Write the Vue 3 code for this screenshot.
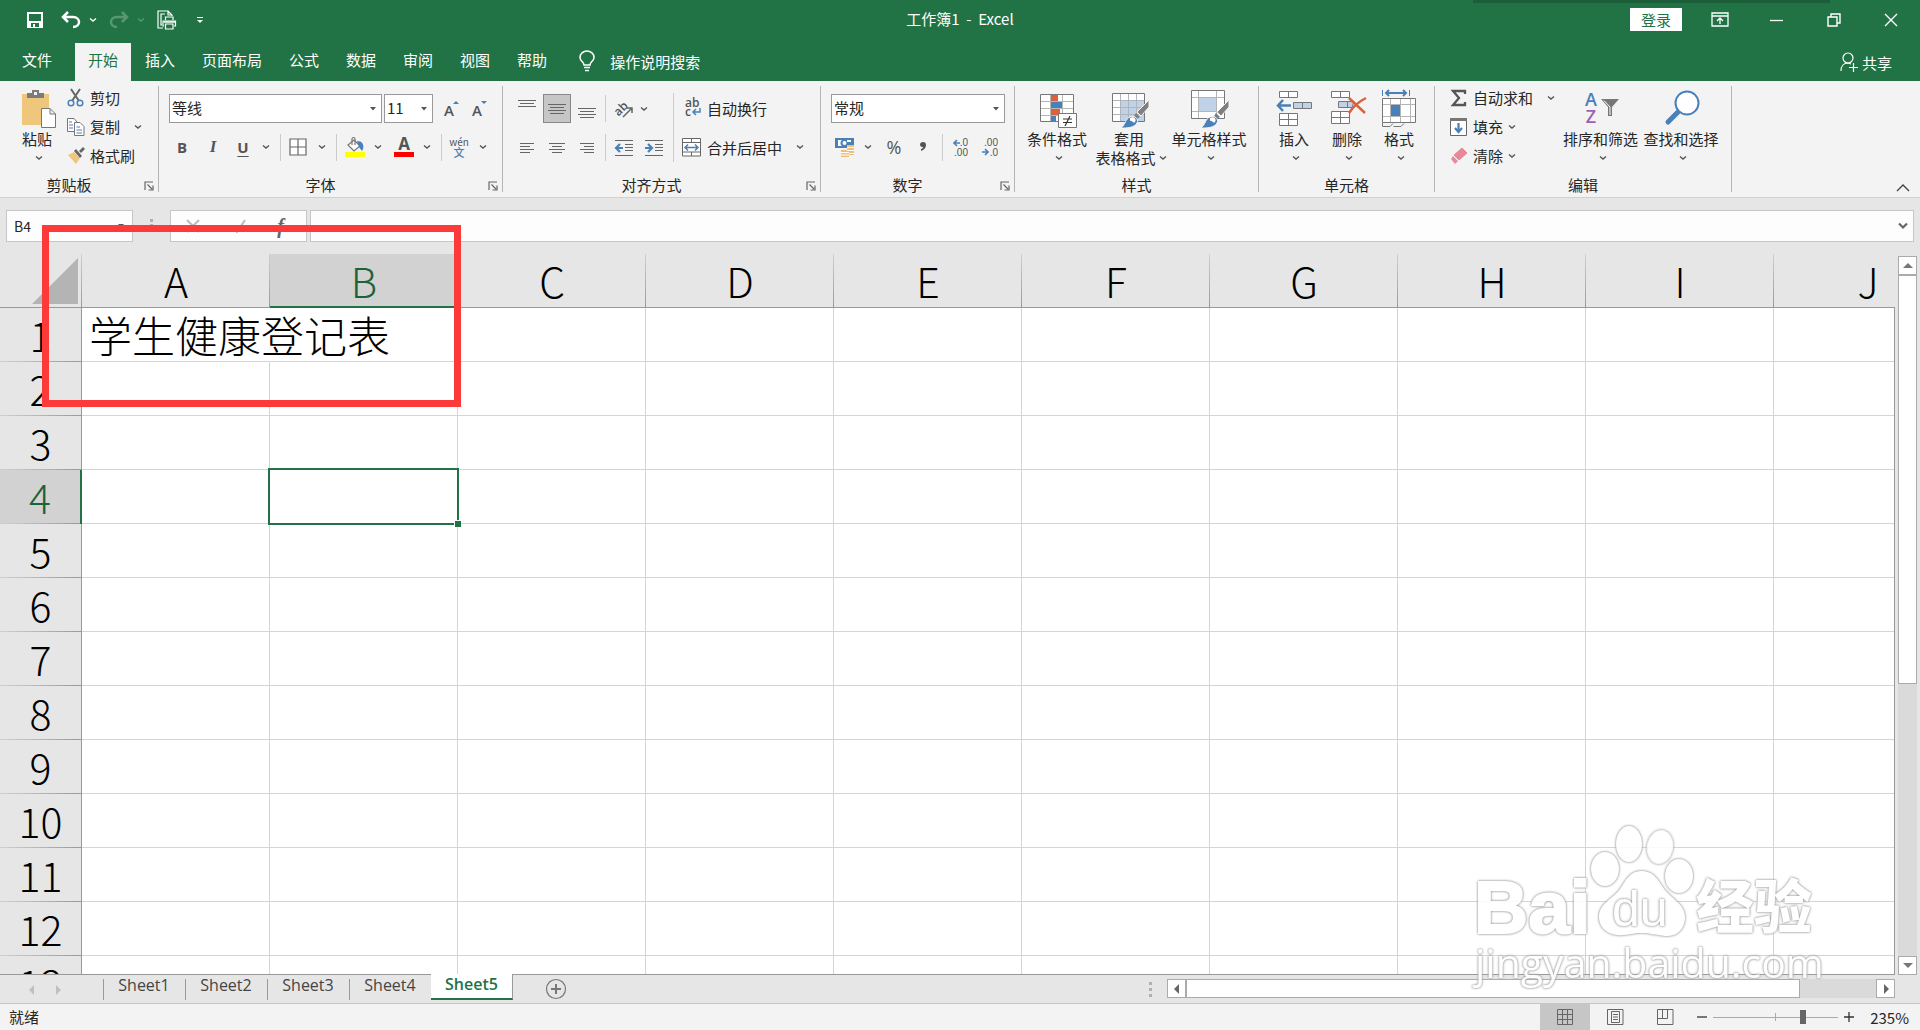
<template>
  <div class="excel">
    <!-- 公用图形 -->
    <svg class="defs" aria-hidden="true">
      <symbol id="chev" viewBox="0 0 8 6"><path d="M1 1.5L4 4L7 1.5" fill="none" stroke="currentColor" stroke-width="1.4" /></symbol>
      <symbol id="tri" viewBox="0 0 8 6"><path d="M1 1H7L4 4.5Z" fill="currentColor" /></symbol>
      <symbol id="launch" viewBox="0 0 10 10"><path d="M1 9V1H9M3.500 3.500L8 8M9 4.500V9H4.500" fill="none" stroke="#666" stroke-width="1.200" /></symbol>
      <symbol id="brush" viewBox="0 0 42 42">
        <path d="M41 13V20L33 29L29 25Z" fill="#7f7f7f" stroke="#f3f3f3" />
        <path d="M28 26L32 30L29 32L26 29Z" fill="#7f7f7f" />
        <path d="M13 41C18 37 17 32 22 30C27 28 31 32 29 36C26 41 19 41 13 41Z" fill="#4a80b8" stroke="#f3f3f3" />
        <path d="M22 31C26 29 29 32 27 35C25 37 24 33 22 34Z" fill="#fff" />
      </symbol>
    </svg>

    <header class="titlebar">
      <div class="quick">
        <button class="icon-btn save" aria-label="保存">
          <svg width="18" height="18" viewBox="0 0 18 18"><path fill="#fff" fill-rule="evenodd" d="M1 1H17V17H1ZM3 3V10H15V3ZM5 12V16H7V13H9V16H13V12Z" /></svg>
        </button>
        <button class="icon-btn" aria-label="撤消">
          <svg width="20" height="18" viewBox="0 0 20 18"><path d="M7 1L2 6L7 11M2 6H12C20 6 20 16 12 16" fill="none" stroke="#fff" stroke-width="2.500" /></svg>
          <svg class="chev"><use href="#chev" /></svg>
        </button>
        <button class="icon-btn redo" aria-label="恢复">
          <svg width="20" height="18" viewBox="0 0 20 18"><path d="M13 1L18 6L13 11M18 6H8C0 6 0 16 8 16" fill="none" stroke="#fff" stroke-width="2.500" /></svg>
          <svg class="chev"><use href="#chev" /></svg>
        </button>
        <button class="icon-btn" aria-label="打印预览">
          <svg width="20" height="20" viewBox="0 0 20 20" fill="none" stroke="#fff" stroke-width="1.200">
            <path d="M6 18H1V1H11L15 5V6M11 1V5H15M5 15H4V4H8" />
            <path d="M8.500 10V7H16V10M7 16H6V11H18.500V16H17M8.500 14H16V19H8.500Z" />
            <path d="M7 12H18" stroke-width="1.500" />
          </svg>
        </button>
        <button class="icon-btn more" aria-label="自定义快速访问工具栏">
          <svg width="8" height="8" viewBox="0 0 8 8"><path d="M1 1.500H7" stroke="#fff" /><path d="M1 4H7L4 7Z" fill="#fff" /></svg>
        </button>
      </div>
      <div class="doc-title">工作簿1&nbsp; -&nbsp; Excel</div>
      <div class="window-tools">
        <button class="login">登录</button>
        <button class="win-btn" aria-label="功能区显示选项">
          <svg width="18" height="16" viewBox="0 0 18 16" fill="none" stroke="#fff" stroke-width="1.300"><path d="M1 1H17V14H1ZM1 4H17M9 12V6M6 9L9 6L12 9" /></svg>
        </button>
        <button class="win-btn" aria-label="最小化">
          <svg width="14" height="14" viewBox="0 0 14 14"><path d="M0 7.500H13" stroke="#fff" stroke-width="1.300" /></svg>
        </button>
        <button class="win-btn" aria-label="还原">
          <svg width="14" height="14" viewBox="0 0 14 14" fill="none" stroke="#fff" stroke-width="1.400"><path d="M1 4H10V13H1ZM4 4V1H13V10H10" /></svg>
        </button>
        <button class="win-btn" aria-label="关闭">
          <svg width="14" height="14" viewBox="0 0 14 14"><path d="M1 1L13 13M13 1L1 13" stroke="#fff" stroke-width="1.400" /></svg>
        </button>
      </div>
      <div class="top-shade"></div>
    </header>

    <nav class="tabs">
      <button
        v-for="tab in tabs"
        :key="tab"
        class="tab"
        :class="{ active: tab === activeTab, file: tab === '文件' }"
        @click="activeTab = tab"
      >{{ tab }}</button>
      <button class="tell-me">
        <svg width="16" height="22" viewBox="0 0 16 22" fill="none" stroke="#fff" stroke-width="1.500">
          <path d="M5 15C5 12 1 11 1 7.500A7 6.500 0 0 1 15 7.500C15 11 11 12 11 15ZM5 17.500H11M6 20.500H10" />
        </svg>
        操作说明搜索
      </button>
      <button class="share">
        <svg width="18" height="20" viewBox="0 0 18 20" fill="none" stroke="#fff" stroke-width="1.200">
          <circle cx="8" cy="6" r="5" /><path d="M1 19C1 14 4 11 8 11L11 12M9 15.500H18M13.500 11V20" />
        </svg>
        共享
      </button>
    </nav>

    <section class="ribbon">
      <div class="group clipboard">
        <div class="group-body">
          <button class="big">
            <svg class="big-icon" viewBox="0 0 42 42">
              <path d="M6 7H33V38H6Z" fill="#eec77d" />
              <path d="M11 11V6H16V3H23V6H28V11Z" fill="#7b7b7b" /><path d="M18 5H21V8H18Z" fill="#f3f3f3" />
              <path d="M25.500 21.500H34L39.500 27V40.500H25.500ZM34 21.500V27H39.500" fill="#fff" stroke="#777" />
            </svg>
            <span>粘贴</span>
            <svg class="chev"><use href="#chev" /></svg>
          </button>
          <div class="small-list">
            <button class="small">
              <svg width="18" height="18" viewBox="0 0 18 18" fill="none">
                <path d="M4 0L12 12M13 0L5 12" stroke="#666" stroke-width="2" />
                <circle cx="4" cy="14" r="2.800" stroke="#4a80b8" stroke-width="1.500" /><circle cx="13" cy="14" r="2.800" stroke="#4a80b8" stroke-width="1.500" />
              </svg>剪切
            </button>
            <button class="small">
              <svg width="18" height="18" viewBox="0 0 18 18" fill="#fff" stroke="#777">
                <path d="M.5.5H7L10 4V13.500H.5Z" /><path d="M7.500 4.500H13L17 8.500V17.500H7.500Z" />
                <path d="M2 4H5M2 7H6M2 10H6M9.500 9H13M9.500 12H15M9.500 15H15" stroke="#4a80b8" />
              </svg>复制
              <svg class="chev far"><use href="#chev" /></svg>
            </button>
            <button class="small">
              <svg width="18" height="18" viewBox="0 0 18 18">
                <path d="M1 8L7 5L13 11L9 17Z" fill="#eec77d" /><path d="M7 4L9 2L15 9L13 11Z" fill="#666" /><path d="M12 4L16 0L18 2L14 6Z" fill="#666" />
              </svg>格式刷
            </button>
          </div>
        </div>
        <div class="group-foot"><span>剪贴板</span><button class="launcher" aria-label="剪贴板设置"><svg><use href="#launch" /></svg></button></div>
      </div>

      <div class="group font">
        <div class="group-body rows">
          <div class="row">
            <div class="combo font-name">
              <select aria-label="字体"><option>等线</option></select>
              <svg class="chev"><use href="#tri" /></svg>
            </div>
            <div class="combo font-size">
              <select aria-label="字号"><option>11</option></select>
              <svg class="chev"><use href="#tri" /></svg>
            </div>
            <div class="size-btns">
              <button class="tool" aria-label="增大字号">
                <svg width="16" height="18" viewBox="0 0 16 18"><text x="0" y="16" class="glyph big-a">A</text><path d="M9 4L12 1L15 4Z" fill="#4a80b8" /></svg>
              </button>
              <button class="tool" aria-label="减小字号">
                <svg width="16" height="18" viewBox="0 0 16 18"><text x="0" y="16" class="glyph big-a">A</text><path d="M9 1H15L12 4Z" fill="#4a80b8" /></svg>
              </button>
            </div>
          </div>
          <div class="row font-tools">
            <button class="tool bold">B</button>
            <button class="tool italic">I</button>
            <button class="tool underline">U</button>
            <button class="tool" aria-label="下划线选项"><svg class="chev"><use href="#chev" /></svg></button>
            <i class="sep"></i>
            <button class="tool" aria-label="边框">
              <svg width="18" height="18" viewBox="0 0 18 18"><path d="M1 1H17V17H1ZM9 1V17M1 9H17" fill="#fff" stroke="#666" stroke-width="1.200" /></svg>
            </button>
            <button class="tool" aria-label="边框选项"><svg class="chev"><use href="#chev" /></svg></button>
            <i class="sep"></i>
            <button class="tool" aria-label="填充颜色">
              <svg width="20" height="20" viewBox="0 0 20 20">
                <path d="M3 8L9 3L15 9L9 14Z" fill="#fff" stroke="#777" stroke-width="1.200" /><path d="M7 8V2C7 0 10 0 10 2V8" fill="none" stroke="#777" stroke-width="1.200" />
                <path d="M12 4C18 4 20 9 17 14L14 10Z" fill="#4a80b8" /><path d="M0 15H20V20H0Z" fill="#ff0" />
              </svg>
            </button>
            <button class="tool" aria-label="填充颜色选项"><svg class="chev"><use href="#chev" /></svg></button>
            <button class="tool" aria-label="字体颜色">
              <svg width="20" height="20" viewBox="0 0 20 20"><text x="10" y="13" text-anchor="middle" class="glyph color-a">A</text><path d="M0 15H20V20H0Z" fill="#f00" /></svg>
            </button>
            <button class="tool" aria-label="字体颜色选项"><svg class="chev"><use href="#chev" /></svg></button>
            <i class="sep"></i>
            <button class="tool pinyin"><span>wén</span><b>文</b></button>
            <button class="tool" aria-label="拼音选项"><svg class="chev"><use href="#chev" /></svg></button>
          </div>
        </div>
        <div class="group-foot"><span>字体</span><button class="launcher" aria-label="字体设置"><svg><use href="#launch" /></svg></button></div>
      </div>

      <div class="group align">
        <div class="group-body">
          <div class="rows">
            <div class="row align-tools">
              <button class="tool" aria-label="顶端对齐"><svg width="18" height="22" viewBox="0 0 18 22"><path d="M0 2.500H18M2 5.500H16M0 8.500H18" class="bars" /></svg></button>
              <button class="tool pressed" aria-label="垂直居中"><svg width="18" height="22" viewBox="0 0 18 22"><path d="M0 6.500H18M2 9.500H16M0 12.500H18M2 15.500H16" class="bars" /></svg></button>
              <button class="tool" aria-label="底端对齐"><svg width="18" height="22" viewBox="0 0 18 22"><path d="M0 10.500H18M2 13.500H16M0 16.500H18M2 19.500H16" class="bars" /></svg></button>
              <i class="sep"></i>
              <button class="tool" aria-label="方向">
                <svg width="20" height="20" viewBox="0 0 20 20"><text x="1" y="15" class="glyph ab" transform="rotate(-45 6 12)">ab</text><path d="M9 18L18 9M13 9H18V14" fill="none" stroke="#666" stroke-width="1.500" /></svg>
              </button>
              <button class="tool" aria-label="方向选项"><svg class="chev"><use href="#chev" /></svg></button>
            </div>
            <div class="row align-tools lower">
              <button class="tool" aria-label="左对齐"><svg width="14" height="12" viewBox="0 0 14 12"><path d="M0 1.500H14M0 4.500H10M0 7.500H14M0 10.500H10" class="bars" /></svg></button>
              <button class="tool" aria-label="居中"><svg width="16" height="12" viewBox="0 0 16 12"><path d="M0 1.500H16M3 4.500H13M0 7.500H16M3 10.500H13" class="bars" /></svg></button>
              <button class="tool" aria-label="右对齐"><svg width="14" height="12" viewBox="0 0 14 12"><path d="M0 1.500H14M4 4.500H14M0 7.500H14M4 10.500H14" class="bars" /></svg></button>
              <i class="sep"></i>
              <button class="tool" aria-label="减少缩进量">
                <svg width="18" height="18" viewBox="0 0 18 18"><path d="M0 1.500H18M10 5.500H18M10 8.500H18M10 11.500H18M0 16.500H18" class="bars" /><path d="M8 9H1M5 5L1 9L5 13" fill="none" stroke="#4a80b8" stroke-width="2.200" /></svg>
              </button>
              <button class="tool" aria-label="增加缩进量">
                <svg width="18" height="18" viewBox="0 0 18 18"><path d="M0 1.500H18M10 5.500H18M10 8.500H18M10 11.500H18M0 16.500H18" class="bars" /><path d="M0 9H7M3 5L7 9L3 13" fill="none" stroke="#4a80b8" stroke-width="2.200" /></svg>
              </button>
            </div>
          </div>
          <i class="sep tall"></i>
          <div class="rows wrap-list">
            <button class="small">
              <svg width="20" height="20" viewBox="0 0 20 20"><text x="3" y="9" class="glyph ab">ab</text><text x="3" y="18" class="glyph ab">c</text><path d="M18 10V14H11M14 11L11 14L14 17" fill="none" stroke="#4a80b8" stroke-width="1.500" /></svg>自动换行
            </button>
            <button class="small">
              <svg width="20" height="20" viewBox="0 0 20 20" fill="#fff" stroke="#666"><path d="M.5 1.500H18.500V19H.5ZM.5 5.500H18.500M.5 15H18.500M9.500 1V5M9.500 15V19" /><path d="M3 10.500H16M6 7.500L3 10.500L6 13.500M13 7.500L16 10.500L13 13.500" fill="none" stroke="#4a80b8" stroke-width="1.500" /></svg>合并后居中
              <svg class="chev far"><use href="#chev" /></svg>
            </button>
          </div>
        </div>
        <div class="group-foot"><span>对齐方式</span><button class="launcher" aria-label="对齐设置"><svg><use href="#launch" /></svg></button></div>
      </div>

      <div class="group number">
        <div class="group-body rows">
          <div class="combo">
            <select aria-label="数字格式"><option>常规</option></select>
            <svg class="chev"><use href="#tri" /></svg>
          </div>
          <div class="row number-tools">
            <button class="tool" aria-label="会计数字格式">
              <svg width="20" height="20" viewBox="0 0 20 20">
                <path d="M0 1H19V11H0Z" fill="#4a80b8" /><path d="M3 3H7C5 4 5 8 7 9H3ZM16 3H12V5H16Z" fill="#fff" /><circle cx="9.500" cy="6" r="2" fill="#fff" />
                <path d="M12 8H19V18H12Z" fill="#eec07a" /><path d="M6 13H14V20H6Z" fill="#eec07a" /><path d="M12 10.500H19M12 13.500H19M14 16.500H19M6 15.500H14M6 18H14" stroke="#fff" />
              </svg>
            </button>
            <button class="tool" aria-label="会计格式选项"><svg class="chev"><use href="#chev" /></svg></button>
            <button class="tool percent">%</button>
            <button class="tool" aria-label="千位分隔样式"><svg width="8" height="12" viewBox="0 0 8 12"><path d="M1 4A3 3 0 1 1 7 4C7 7 5 9 2 10V8C4 7 4 7 4 6A2.500 2.500 0 0 1 1 4Z" fill="#555" /></svg></button>
            <i class="sep"></i>
            <button class="tool" aria-label="增加小数位数">
              <svg width="16" height="20" viewBox="0 0 16 20"><text x="15" y="9" text-anchor="end" class="glyph dec">.0</text><text x="15" y="19" text-anchor="end" class="glyph dec">.00</text><path d="M7 6H1M4 3L1 6L4 9" fill="none" stroke="#4a80b8" stroke-width="1.700" /></svg>
            </button>
            <button class="tool" aria-label="减少小数位数">
              <svg width="16" height="20" viewBox="0 0 16 20"><text x="16" y="9" text-anchor="end" class="glyph dec">.00</text><text x="16" y="19" text-anchor="end" class="glyph dec">.0</text><path d="M0 15H6M3 12L6 15L3 18" fill="none" stroke="#4a80b8" stroke-width="1.700" /></svg>
            </button>
          </div>
        </div>
        <div class="group-foot"><span>数字</span><button class="launcher" aria-label="数字设置"><svg><use href="#launch" /></svg></button></div>
      </div>

      <div class="group styles">
        <div class="group-body">
          <button class="big">
            <svg class="big-icon" viewBox="0 0 42 42">
              <path d="M4.500 7.500H37.500V34.500H4.500Z" fill="#fff" stroke="#777" />
              <path d="M5 14.500H37M5 21.500H37M5 28.500H37M14.500 8V34M26.500 8V34" stroke="#b5b5b5" />
              <path d="M15 8H22V14H15ZM15 22H24V28H15Z" fill="#d9623b" /><path d="M15 15H26V21H15ZM15 29H20V34H15Z" fill="#4a80b8" />
              <path d="M22.500 26.500H40.500V40.500H22.500Z" fill="#fff" stroke="#777" /><path d="M27 32H36M27 35.500H36M34 29L29 39" stroke="#333" stroke-width="1.200" />
            </svg>
            <span>条件格式</span>
            <svg class="chev"><use href="#chev" /></svg>
          </button>
          <button class="big">
            <svg class="big-icon" viewBox="0 0 42 42">
              <path d="M4.500 6.500H36.500V34.500H4.500Z" fill="#fff" stroke="#777" /><path d="M12.500 14H36V34H12.500Z" fill="#bfd2e8" />
              <path d="M5 13.500H36M5 20.500H36M5 27.500H36M12.500 7V34M20.500 7V34M28.500 7V34" stroke="#b0b5bc" /><use href="#brush" />
            </svg>
            <span>套用</span>
            <span class="second">表格格式 <svg class="chev"><use href="#chev" /></svg></span>
          </button>
          <button class="big">
            <svg class="big-icon" viewBox="0 0 42 42">
              <path d="M3.500 3.500H36.500V31.500H3.500Z" fill="#fff" stroke="#777" />
              <path d="M4 10.500H36M4 24.500H36M10.500 4V31M28.500 4V31" stroke="#b5b5b5" /><path d="M11 11H28V24H11Z" fill="#bfd2e8" /><use href="#brush" />
            </svg>
            <span>单元格样式</span>
            <svg class="chev"><use href="#chev" /></svg>
          </button>
        </div>
        <div class="group-foot"><span>样式</span></div>
      </div>

      <div class="group cells">
        <div class="group-body">
          <button class="big">
            <svg class="big-icon" viewBox="0 0 42 42">
              <path d="M6.500 4.500H24.500V10.500H6.500ZM15.500 4.500V10.500M6.500 26.500H24.500V38.500H6.500ZM15.500 26.500V38.500M6.500 32.500H24.500" fill="#fff" stroke="#777" />
              <path d="M20.500 15.500H38.500V21.500H20.500ZM29.500 15.500V21.500" fill="#bfd2e8" stroke="#777" />
              <path d="M18 18.500H5M10 13L5 18.500L10 24" fill="none" stroke="#4a80b8" stroke-width="2.500" />
            </svg>
            <span>插入</span>
            <svg class="chev"><use href="#chev" /></svg>
          </button>
          <button class="big">
            <svg class="big-icon" viewBox="0 0 42 42">
              <path d="M5.500 4.500H23.500V10.500H5.500ZM14.500 4.500V10.500M5.500 24.500H23.500V36.500H5.500ZM14.500 24.500V36.500M5.500 30.500H23.500" fill="#fff" stroke="#777" />
              <path d="M12.500 14.500H28L26 20.500H12.500ZM21.500 14.500V20.500" fill="#bfd2e8" stroke="#777" />
              <path d="M23 11L39 26M40 11C34 14 27 20 23 26" fill="none" stroke="#d9623b" stroke-width="2.500" />
            </svg>
            <span>删除</span>
            <svg class="chev"><use href="#chev" /></svg>
          </button>
          <button class="big">
            <svg class="big-icon" viewBox="0 0 42 42">
              <path d="M4.500 11.500H37.500V35.500H4.500Z" fill="#fff" stroke="#777" />
              <path d="M5 17.500H37M5 29.500H37M12.500 12V35M22.500 12V35M32.500 12V35" stroke="#b5b5b5" /><path d="M13 18H22V29H13Z" fill="#4a80b8" />
              <path d="M4.500 36V39.500H12L15 36.500M15.500 39.500H23L26 36.500" fill="none" stroke="#777" />
              <path d="M4.500 3V9M31.500 3V9" stroke="#4a80b8" /><path d="M8 6H28M11 3L8 6L11 9M25 3L28 6L25 9" fill="none" stroke="#4a80b8" stroke-width="2" />
            </svg>
            <span>格式</span>
            <svg class="chev"><use href="#chev" /></svg>
          </button>
        </div>
        <div class="group-foot"><span>单元格</span></div>
      </div>

      <div class="group edit">
        <div class="group-body">
          <div class="small-list">
            <button class="small">
              <svg width="18" height="18" viewBox="0 0 18 18"><path d="M15 5V2H3L9 9L3 16H15V13" fill="none" stroke="#555" stroke-width="2.300" /></svg>自动求和
              <svg class="chev far"><use href="#chev" /></svg>
            </button>
            <button class="small">
              <svg width="18" height="18" viewBox="0 0 18 18"><path d="M.5 1.500H16.500V17.500H.5Z" fill="#fff" stroke="#666" /><path d="M0 0H17V3H0Z" fill="#777" /><path d="M8.500 5V14M5 10L8.500 14L12 10" fill="none" stroke="#4a80b8" stroke-width="2.200" /></svg>填充
              <svg class="chev"><use href="#chev" /></svg>
            </button>
            <button class="small">
              <svg width="18" height="18" viewBox="0 0 18 18"><path d="M12 1L17 6L9 13L4 8Z" fill="#e8899a" stroke="#e8899a" stroke-linejoin="round" /><path d="M3 9L8 14L5 17L1 12Z" fill="#e8899a" /></svg>清除
              <svg class="chev"><use href="#chev" /></svg>
            </button>
          </div>
          <button class="big">
            <svg class="big-icon" viewBox="0 0 42 42">
              <text x="11" y="19" text-anchor="middle" class="glyph letter blue">A</text><text x="11" y="36" text-anchor="middle" class="glyph letter purple">Z</text>
              <path d="M21 12H39L32 20V29H28V20Z" fill="#777" /><path d="M24 13.500L30 20V28" fill="none" stroke="#fff" />
            </svg>
            <span>排序和筛选</span>
            <svg class="chev"><use href="#chev" /></svg>
          </button>
          <button class="big">
            <svg class="big-icon" viewBox="0 0 42 42">
              <path d="M19 24L8 35" stroke="#4a80b8" stroke-width="5" stroke-linecap="round" /><circle cx="27" cy="16" r="11.500" fill="#fff" stroke="#4a80b8" stroke-width="2" />
            </svg>
            <span>查找和选择</span>
            <svg class="chev"><use href="#chev" /></svg>
          </button>
        </div>
        <div class="group-foot"><span>编辑</span></div>
      </div>

      <button class="collapse" aria-label="折叠功能区">
        <svg width="14" height="8" viewBox="0 0 14 8"><path d="M1 7L7 1L13 7" fill="none" stroke="#444" stroke-width="1.400" /></svg>
      </button>
    </section>

    <div class="formula-bar">
      <div class="name-box">
        <input v-model="cellName" aria-label="名称框" />
        <svg class="chev"><use href="#tri" /></svg>
      </div>
      <div class="grip"></div>
      <div class="fx-box">
        <button aria-label="取消"><svg width="16" height="16" viewBox="0 0 16 16"><path d="M2 2L14 14M14 2L2 14" stroke="#bbb" stroke-width="2" /></svg></button>
        <button aria-label="输入"><svg width="16" height="16" viewBox="0 0 16 16"><path d="M2 10L6 14L14 2" fill="none" stroke="#bbb" stroke-width="2" /></svg></button>
        <button class="fx">f</button>
      </div>
      <div class="formula">
        <input v-model="formula" aria-label="编辑栏" />
        <svg width="10" height="8" viewBox="0 0 10 8"><path d="M1 1.500L5 5.500L9 1.500" fill="none" stroke="#666" stroke-width="2.200" /></svg>
      </div>
    </div>

    <main class="work">
      <div class="sheet">
        <table>
          <thead>
            <tr>
              <th class="corner"><svg width="46" height="46" viewBox="0 0 46 46"><path d="M46 0V46H0Z" fill="#b4b4b4" /></svg></th>
              <th v-for="col in columns" :key="col" :class="{ current: col === 'B' }">{{ col }}</th>
            </tr>
          </thead>
          <tbody>
            <tr v-for="row in 13" :key="row">
              <th :class="{ current: row === 4 }">{{ row }}</th>
              <td
                v-for="col in columns"
                :key="col"
                :class="{ selected: col + row === cellName, spill: cells[col + row] }"
              >{{ cells[col + row] }}</td>
            </tr>
          </tbody>
        </table>
      </div>
      <div class="vscroll">
        <button aria-label="向上滚动"><svg width="10" height="6" viewBox="0 0 10 6"><path d="M0 5H10L5 0Z" fill="#777" /></svg></button>
        <div class="track"><div class="thumb"></div></div>
        <button aria-label="向下滚动"><svg width="10" height="6" viewBox="0 0 10 6"><path d="M0 0H10L5 5Z" fill="#777" /></svg></button>
      </div>
    </main>

    <div class="sheet-bar">
      <div class="sheet-nav">
        <button aria-label="上一个工作表"><svg width="6" height="10" viewBox="0 0 6 10"><path d="M6 0V10L1 5Z" fill="#c0c0c0" /></svg></button>
        <button aria-label="下一个工作表"><svg width="6" height="10" viewBox="0 0 6 10"><path d="M0 0V10L5 5Z" fill="#c0c0c0" /></svg></button>
      </div>
      <button
        v-for="name in sheets"
        :key="name"
        class="sheet-tab"
        :class="{ active: name === activeSheet }"
        @click="activeSheet = name"
      >{{ name }}</button>
      <button class="add-sheet" aria-label="新工作表">
        <svg width="22" height="22" viewBox="0 0 22 22" fill="none" stroke="#777"><circle cx="11" cy="11" r="9.500" stroke-width="1.200" /><path d="M6 11H16M11 6V16" stroke-width="2" /></svg>
      </button>
      <div class="bar-dots"></div>
      <div class="hscroll">
        <button aria-label="向左滚动"><svg width="6" height="10" viewBox="0 0 6 10"><path d="M5 0V10L0 5Z" fill="#666" /></svg></button>
        <div class="track"><div class="thumb"></div></div>
        <button aria-label="向右滚动"><svg width="6" height="10" viewBox="0 0 6 10"><path d="M1 0V10L6 5Z" fill="#666" /></svg></button>
      </div>
    </div>

    <footer class="status">
      <span class="ready">就绪</span>
      <button class="view active" aria-label="普通"><svg width="18" height="18" viewBox="0 0 18 18"><path d="M1.500 1.500H16.500V16.500H1.500ZM6.500 1.500V16.500M11.500 1.500V16.500M1.500 6.500H16.500M1.500 11.500H16.500" /></svg></button>
      <button class="view" aria-label="页面布局"><svg width="18" height="18" viewBox="0 0 18 18"><path d="M1.500 1.500H17V16.500H1.500ZM5.500 3.500H13.500V14.500H5.500ZM7 6.500H12M7 9H12M7 11.500H12" /></svg></button>
      <button class="view" aria-label="分页预览"><svg width="18" height="18" viewBox="0 0 18 18"><path d="M1.500 1.500H17V16.500H1.500ZM1.500 10.500H11.500V1.500M6.500 1.500V10.500" /></svg></button>
      <button class="zoom-btn" aria-label="缩小"><svg width="12" height="12" viewBox="0 0 12 12"><path d="M1 6H11" stroke="#333" stroke-width="1.300" /></svg></button>
      <div class="slider"><input v-model="zoom" type="range" min="0" max="100" aria-label="显示比例" /></div>
      <button class="zoom-btn" aria-label="放大"><svg width="12" height="12" viewBox="0 0 12 12"><path d="M1 6H11M6 1V11" stroke="#333" stroke-width="1.300" /></svg></button>
      <span class="percent-text">235%</span>
    </footer>

    <!-- 红色标注框 -->
    <div class="mark"></div>

    <!-- 水印 -->
    <svg class="watermark" width="350" height="180" viewBox="0 0 350 180">
      <text x="4" y="112" class="bai">Bai</text>
      <ellipse cx="135" cy="48" rx="14" ry="17" />
      <ellipse cx="159" cy="23" rx="13" ry="18" />
      <ellipse cx="190" cy="26" rx="13" ry="17" transform="rotate(10 190 26)" />
      <ellipse cx="209" cy="55" rx="14" ry="17" />
      <path d="M171 50C185 50 188 60 195 69C203 79 216 84 215 98C214 110 205 116 195 115C185 114 180 112 171 112C162 112 157 115 147 114C135 113 128 104 129 94C131 81 143 78 150 68C156 59 160 50 171 50Z" />
      <text x="142" y="105" class="du">du</text>
      <text x="226" y="107" class="jy">经验</text>
      <text x="5" y="157" class="url">jingyan.baidu.com</text>
    </svg>
  </div>
</template>

<script setup>
import { ref } from 'vue'

// 功能区选项卡
const tabs = ['文件', '开始', '插入', '页面布局', '公式', '数据', '审阅', '视图', '帮助']
const activeTab = ref('开始')

// 表格数据
const columns = ['A', 'B', 'C', 'D', 'E', 'F', 'G', 'H', 'I', 'J']
const cells = { A1: '学生健康登记表' }
const cellName = ref('B4')
const formula = ref('')

// 工作表
const sheets = ['Sheet1', 'Sheet2', 'Sheet3', 'Sheet4', 'Sheet5']
const activeSheet = ref('Sheet5')
const zoom = ref(73)
</script>

<style>
body {
  margin: 0;
  overflow: hidden;
}
</style>

<style scoped>
.excel {
  position: relative;
  display: flex;
  flex-direction: column;
  height: 100vh;
  background: #e6e6e6;
  color: #262626;
  font-family: 'Noto Sans CJK SC', sans-serif;
  font-size: 15px;
  font-weight: 400;
  overflow: hidden;
}

.excel * {
  box-sizing: border-box;
}

.defs {
  position: absolute;
  width: 0;
  height: 0;
}

button,
select,
input {
  margin: 0;
  padding: 0;
  border: none;
  background: none;
  color: inherit;
  font: inherit;
}

svg {
  flex: none;
  overflow: visible;
}

.chev {
  width: 8px;
  height: 6px;
  color: #555;
}

/* 标题栏 */
.titlebar {
  position: relative;
  display: grid;
  grid-template-columns: 1fr auto 1fr;
  align-items: center;
  height: 43px;
  padding-bottom: 4px;
  background: #217346;
  color: #fff;
}

.titlebar .chev {
  color: #fff;
}

.quick {
  display: flex;
  align-items: center;
  gap: 12px;
  padding-left: 26px;
}

.save {
  margin-right: 5px;
}

.icon-btn {
  display: flex;
  align-items: center;
  gap: 8px;
}

.redo {
  opacity: 0.25;
}

.more {
  margin-left: 7px;
}

.doc-title {
  padding-bottom: 2px;
}

.top-shade {
  position: absolute;
  top: 0;
  right: 90px;
  width: 357px;
  height: 3px;
  background: #1b5e39;
}

.window-tools {
  display: flex;
  align-items: center;
  justify-content: flex-end;
  padding-right: 1px;
}

.login {
  width: 52px;
  height: 23px;
  margin-right: 9px;
  background: #fff;
  color: #217346;
  line-height: 21px;
}

.win-btn {
  display: flex;
  align-items: center;
  justify-content: center;
  width: 57px;
}

/* 选项卡 */
.tabs {
  display: flex;
  gap: 1px;
  height: 38px;
  background: #217346;
  color: #fff;
}

.tab {
  padding: 0 13px 4px;
  line-height: 32px;
}

.tab.file {
  width: 74px;
}

.tab.active {
  background: #f3f3f3;
  color: #217346;
}

.tell-me {
  display: flex;
  align-items: center;
  gap: 15px;
  margin-left: 18px;
  padding-bottom: 2px;
}

.share {
  display: flex;
  align-items: center;
  gap: 4px;
  margin-left: auto;
  padding-right: 28px;
}

/* 功能区 */
.ribbon {
  display: flex;
  height: 117px;
  padding: 5px 0;
  border-bottom: 1px solid #d0d0d0;
  background: #f3f3f3;
}

.group {
  display: flex;
  flex: none;
  flex-direction: column;
  border-right: 1px solid #b5b5b5;
}

.group-body {
  display: flex;
  height: 94px;
}

.group-foot {
  display: flex;
  height: 12px;
}

.group-foot span {
  flex: 1;
  line-height: 10px;
  text-align: center;
}

.launcher {
  display: flex;
  align-items: center;
  width: 20px;
  padding-left: 6px;
}

.launcher svg {
  width: 10px;
  height: 10px;
}

.rows {
  display: flex;
  flex-direction: column;
  gap: 10px;
  padding-top: 8px;
}

.row {
  display: flex;
  gap: 2px;
  height: 29px;
}

.clipboard {
  width: 159px;
}

.clipboard .group-body {
  gap: 5px;
  padding-left: 12px;
}

.clipboard .big {
  width: 50px;
}

.big {
  display: flex;
  flex-direction: column;
  align-items: center;
  padding-top: 1px;
  line-height: 19px;
  white-space: nowrap;
}

.big-icon {
  width: 42px;
  height: 42px;
}

.big .chev {
  margin: 7px 0 0 4px;
}

.big .second {
  display: flex;
  align-items: center;
  gap: 3px;
  padding-left: 4px;
}

.big .second .chev {
  margin: 0;
}

.small-list {
  display: flex;
  flex-direction: column;
  gap: 5px;
}

.small {
  display: flex;
  align-items: center;
  gap: 5px;
  height: 24px;
  padding-bottom: 1px;
  white-space: nowrap;
}

.small .far {
  margin-left: 9px;
}

.font {
  width: 344px;
}

.font .group-body {
  padding-left: 10px;
}

.combo {
  position: relative;
  display: flex;
  align-items: center;
  height: 29px;
  border: 1px solid #999;
  background: #fff;
}

.combo select {
  flex: 1;
  width: 100%;
  height: 27px;
  padding: 0 0 2px 2px;
  appearance: none;
}

.combo .chev {
  position: absolute;
  right: 4px;
}

.font-name {
  width: 213px;
}

.font-size {
  width: 49px;
}

.tool {
  display: flex;
  align-items: center;
  justify-content: center;
  color: #555;
}

.size-btns {
  display: flex;
  gap: 12px;
  padding-left: 9px;
}

.font-tools,
.align-tools,
.number-tools {
  display: grid;
  gap: 0;
}

.font-tools {
  grid-template-columns: 26px 36px 24px 22px 6px 30px 18px 10px 28px 18px 34px 12px 16px 20px 28px;
  padding-bottom: 1px;
}

.sep {
  justify-self: center;
  align-self: center;
  width: 1px;
  height: 27px;
  background: #ccc;
}

.sep.tall {
  align-self: flex-start;
  height: 69px;
  margin: 7px 8px 0 5px;
}

.bold,
.italic,
.underline {
  font-family: 'Open Sans', sans-serif;
  font-size: 15px;
  font-weight: 700;
}

.italic {
  font-family: 'Liberation Serif', serif;
  font-size: 17px;
  font-style: italic;
}

.underline {
  text-decoration: underline;
  text-underline-offset: 3px;
}

.pinyin {
  flex-direction: column;
  font-size: 10px;
  line-height: 10px;
}

.pinyin b {
  color: #4a80b8;
  font-size: 11px;
  font-weight: 500;
  line-height: 11px;
}

.glyph {
  fill: #555;
  font-family: 'Open Sans', sans-serif;
}

.big-a {
  font-size: 15px;
  font-weight: 600;
}

.color-a {
  font-size: 17px;
  font-weight: 700;
}

.ab {
  font-size: 12px;
  font-weight: 600;
}

.dec {
  font-family: 'Liberation Sans', sans-serif;
  font-size: 10px;
}

.letter {
  font-size: 18px;
  font-weight: 600;
}

.blue {
  fill: #4a80b8;
}

.purple {
  fill: #9a62b5;
}

.bars {
  fill: none;
  stroke: #666;
}

.align {
  width: 318px;
}

.align .group-body {
  padding-left: 9px;
}

.align-tools {
  grid-template-columns: 30px 30px 30px 6px 32px 8px 20px;
}

.align-tools.lower {
  grid-template-columns: 30px 30px 30px 6px 32px 28px;
}

.pressed {
  margin: 0 1px;
  border: 1px solid #888;
  background: #c6c6c6;
}

.wrap-list .small {
  height: 29px;
}

.number {
  width: 194px;
}

.number .group-body {
  padding: 8px 9px 0 10px;
}

.number-tools {
  grid-template-columns: 28px 18px 34px 24px 14px 24px 34px;
  padding-bottom: 1px;
}

.percent {
  font-family: 'Open Sans', sans-serif;
  font-size: 18px;
}

.styles {
  width: 244px;
}

.styles .group-body {
  display: grid;
  grid-template-columns: 68px 76px 84px;
  padding-left: 8px;
}

.cells {
  width: 176px;
}

.cells .group-body {
  display: grid;
  grid-template-columns: 52px 54px 50px;
  padding-left: 9px;
}

.edit {
  width: 297px;
}

.edit .group-body {
  display: grid;
  grid-template-columns: 110px 81px 80px;
  padding-left: 15px;
}

.collapse {
  display: flex;
  align-self: flex-end;
  margin-left: auto;
  padding-right: 10px;
}

/* 编辑栏 */
.formula-bar {
  display: flex;
  height: 56px;
  padding: 12px 6px;
}

.name-box,
.fx-box,
.formula {
  display: flex;
  align-items: center;
  border: 1px solid #c6c6c6;
  background: #fdfdfd;
}

.name-box {
  width: 127px;
  padding: 0 7px;
  font-size: 14px;
}

.name-box input,
.formula input {
  flex: 1;
  min-width: 0;
  height: 100%;
}

.grip {
  width: 3px;
  height: 15px;
  margin: 9px 17px 0;
  background: repeating-linear-gradient(#b0b0b0 0 3px, transparent 3px 5px);
}

.fx-box {
  justify-content: space-between;
  width: 137px;
  padding: 0 14px;
}

.fx-box button {
  display: flex;
}

.fx-box .fx {
  padding-right: 8px;
  color: #666;
  font-family: 'Liberation Serif', serif;
  font-size: 20px;
  font-style: italic;
  font-weight: 700;
}

.formula {
  flex: 1;
  margin-left: 3px;
  padding: 0 5px 0 8px;
}

/* 表格区 */
.work {
  display: flex;
  flex: 1;
  gap: 3px;
  min-height: 0;
  padding-right: 3px;
}

.sheet {
  position: relative;
  flex: 1;
  min-width: 0;
  overflow: hidden;
  border-bottom: 1px solid #999;
}

.sheet::after {
  content: '';
  position: absolute;
  top: 53px;
  right: 0;
  bottom: 0;
  width: 1px;
  background: #999;
}

table {
  width: 1962px;
  border-spacing: 0;
  table-layout: fixed;
}

th,
td {
  height: 54px;
  padding: 0;
  line-height: 52px;
  vertical-align: top;
}

th {
  width: 188px;
  color: #000;
  font-size: 41px;
  font-weight: 300;
}

thead th {
  border-bottom: 1px solid #999;
  background: linear-gradient(#d0d0d0, #999) right / 1px 100% no-repeat #e6e6e6;
}

thead th.corner {
  width: 82px;
  padding: 4px 4px 0 0;
  line-height: 0;
  text-align: right;
}

tbody th {
  border-right: 1px solid #999;
  background: linear-gradient(90deg, #d0d0d0, #999) bottom / 100% 1px no-repeat #e6e6e6;
}

th.current {
  background-color: #d2d2d2;
  color: #1e6239;
}

thead th.current {
  border-bottom: 2px solid #217346;
}

tbody th.current {
  border-right: 2px solid #217346;
}

td {
  border-right: 1px solid #d4d4d4;
  border-bottom: 1px solid #d4d4d4;
  background: #fff;
  color: #000;
  font-size: 43px;
  font-weight: 300;
  white-space: nowrap;
}

td.spill {
  position: relative;
  z-index: 1;
  padding-left: 7px;
  border-right-color: #fff;
  line-height: 53px;
}

td.selected {
  position: relative;
}

td.selected::before {
  content: '';
  position: absolute;
  inset: -2px;
  border: 2px solid #217346;
}

td.selected::after {
  content: '';
  position: absolute;
  right: -4px;
  bottom: -4px;
  width: 6px;
  height: 6px;
  border: solid #fff;
  border-width: 1px 0 0 1px;
  background: #217346;
}

/* 滚动条 */
.vscroll {
  display: flex;
  flex-direction: column;
  width: 19px;
  padding-top: 2px;
}

.vscroll button,
.hscroll button {
  display: flex;
  flex: none;
  align-items: center;
  justify-content: center;
  width: 19px;
  height: 19px;
  border: 1px solid #ababab;
  background: #fff;
}

.track {
  flex: 1;
  background: #dadada;
}

.thumb {
  border: 1px solid #ababab;
  background: #fff;
}

.vscroll .thumb {
  height: 60%;
}

.hscroll .thumb {
  width: 89%;
  height: 19px;
}

/* 工作表标签 */
.sheet-bar {
  display: flex;
  height: 28px;
  padding-right: 25px;
  font-family: 'Open Sans', sans-serif;
  font-size: 16px;
}

.sheet-nav {
  display: flex;
  gap: 22px;
  width: 103px;
  padding-left: 28px;
}

.sheet-tab {
  width: 82px;
  height: 25px;
  padding-bottom: 4px;
  background: linear-gradient(#999, #999) 0 4px / 1px 21px no-repeat;
  color: #444;
  line-height: 21px;
}

.sheet-tab.active {
  position: relative;
  height: 26px;
  margin-top: -1px;
  border-right: 1px solid #999;
  border-bottom: 2px solid #217346;
  background: #fff;
  color: #217346;
  font-weight: 600;
}

.add-sheet {
  display: flex;
  align-items: center;
  margin-left: 32px;
}

.bar-dots {
  width: 3px;
  height: 15px;
  margin: 7px 15px 0 auto;
  background: repeating-linear-gradient(#b0b0b0 0 3px, transparent 3px 6px);
}

.hscroll {
  display: flex;
  width: 728px;
  padding-top: 4px;
}

.hscroll .track {
  height: 19px;
}

/* 状态栏 */
.status {
  display: flex;
  align-items: center;
  height: 27px;
  padding-right: 11px;
  border-top: 1px solid #c6c6c6;
  background: #f3f3f3;
}

.ready {
  flex: 1;
  padding: 0 0 2px 9px;
}

.view {
  display: flex;
  align-items: center;
  justify-content: center;
  width: 50px;
  height: 26px;
}

.view.active {
  background: #c6c6c6;
}

.view path {
  fill: none;
  stroke: #666;
}

.zoom-btn {
  display: flex;
  width: 12px;
}

.view + .zoom-btn {
  margin-left: 6px;
}

.slider {
  display: flex;
  align-items: center;
  width: 125px;
  height: 26px;
  margin: 0 5px;
  background: linear-gradient(#aaa, #aaa) center / 1px 8px no-repeat, linear-gradient(#aaa, #aaa) center / 100% 1px no-repeat;
}

.slider input {
  width: 100%;
  appearance: none;
}

.slider input::-webkit-slider-thumb {
  width: 6px;
  height: 14px;
  background: #666;
  appearance: none;
}

.percent-text {
  width: 54px;
  font-size: 15px;
  text-align: right;
}

/* 浮层 */
.mark {
  position: absolute;
  top: 225px;
  left: 42px;
  z-index: 2;
  width: 419px;
  height: 182px;
  border: 7px solid #fc3a3a;
}

.watermark {
  position: absolute;
  right: 100px;
  bottom: 29px;
  z-index: 2;
  opacity: 0.9;
  pointer-events: none;
}

.watermark > * {
  fill: #fff;
  filter: drop-shadow(0 0 1px #888) drop-shadow(0 0 1px #ccc);
}

.bai {
  font-family: 'Liberation Sans', sans-serif;
  font-size: 75px;
  font-weight: 700;
  stroke: #fff;
  stroke-width: 2px;
}

.du {
  font-family: 'Liberation Sans', sans-serif;
  font-size: 50px;
}

.jy {
  font-size: 58px;
  font-weight: 900;
}

.url {
  font-family: 'Open Sans', sans-serif;
  font-size: 41px;
}
</style>
